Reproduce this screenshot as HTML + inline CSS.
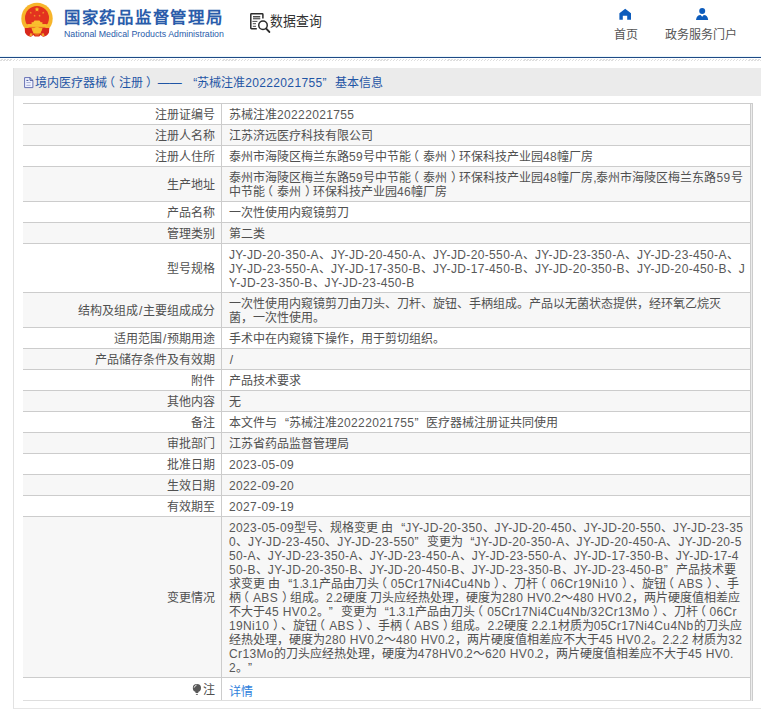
<!DOCTYPE html>
<html lang="zh-CN">
<head>
<meta charset="utf-8">
<title>国家药品监督管理局 数据查询</title>
<style>
html,body{margin:0;padding:0;}
body{width:761px;height:710px;overflow:hidden;background:#fff;position:relative;
  font-family:"Liberation Sans",sans-serif;font-size:12px;letter-spacing:0;line-height:14px;color:#505050;text-spacing-trim:space-all;}
.l{font-size:12px;letter-spacing:0.36px;color:#585858;}
#ptext .l{color:inherit;}
.sl{display:inline-block;width:4.6px;text-align:center;letter-spacing:0;font-size:12px;}
.l i{font-style:normal;letter-spacing:-0.75px;}
b.p1,b.p2{font-weight:normal;position:relative;}
b.p1{left:-4px;}
b.p2{left:3.5px;}
.q1,.q2{display:inline-block;width:12px;}
.q1{text-align:right;}
.q2{text-align:left;}
#hdr{position:absolute;left:0;top:0;width:761px;height:57px;background:#fff;}
#emblem{position:absolute;left:16px;top:0;width:42px;height:42px;}
#t1{position:absolute;left:64px;top:5.5px;font-size:16.4px;letter-spacing:1.72px;line-height:22px;font-weight:bold;color:#2a5caa;white-space:nowrap;}
#t2{letter-spacing:0;position:absolute;left:64px;top:27.5px;font-size:8.8px;line-height:12px;color:#2a5caa;white-space:nowrap;}
#qicon{position:absolute;left:246px;top:8px;width:28px;height:28px;}
#qtext{letter-spacing:0;position:absolute;left:270px;top:11px;font-size:14px;line-height:20px;color:#333;white-space:nowrap;transform-origin:0 0;transform:scaleX(0.918);}
.nav{letter-spacing:0;position:absolute;top:28px;font-size:12px;line-height:14px;color:#555;white-space:nowrap;text-align:center;}
.navi{position:absolute;}
#bline{position:absolute;left:0;top:56px;width:761px;height:1px;background:#1f4a85;border-top:1px solid #e9f6fc;}
#hatch{position:absolute;left:0;top:59px;width:761px;height:2px;
  background:repeating-linear-gradient(135deg,#fff 0,#fff 1.3px,#dedede 1.3px,#dedede 2.15px);}
#panel{position:absolute;left:13px;top:68px;width:760px;height:641px;border-left:1px solid #e2e2e2;border-bottom:1px solid #e6e6e6;box-sizing:border-box;}
#ptitle{position:absolute;left:0;top:0;width:760px;height:28px;background:#ebebeb;}
#picon{position:absolute;left:10px;top:8.5px;width:10px;height:12px;}
#ptext{position:absolute;left:20.5px;top:8px;line-height:14px;color:#1f55a5;white-space:nowrap;}
#tbl{position:absolute;left:23px;top:103px;width:728px;border-top:1px solid #ccc;}
.r{display:flex;border-bottom:1px solid #ccc;background:#fff;}
.r.g{background:#f7f7f7;}
.k{flex:none;width:199px;box-sizing:border-box;padding:4px 6px 2px 0;text-align:right;border-right:1px solid #ccc;display:flex;align-items:center;justify-content:flex-end;white-space:nowrap;}
.v{flex:1;min-width:0;overflow:hidden;box-sizing:border-box;padding:4px 0 2px 7px;white-space:nowrap;border-right:1px solid #ccc;}
#rb{position:absolute;left:751px;top:103px;width:1px;height:597px;background:#ececec;border-right:1px solid #ccc;border-top:1px solid #ccc;}
a{color:#2f7fdc;text-decoration:none;}
.bulb{width:10px;height:13px;margin-right:1px;flex:none;position:relative;top:-0.8px;}
.r.last .k{padding-top:5px;padding-bottom:3px;}
.r.last .v{padding-top:7px;padding-bottom:1px;}
.r.last{border-bottom-color:#dedede;}
</style>
</head>
<body>
<div id="hdr">
  <svg id="emblem" viewBox="0 0 42 42">
<circle cx="21" cy="18.4" r="15.7" fill="#f7b52b"/>
<circle cx="21" cy="17.9" r="12" fill="#e3321f"/>
<path d="M9.8,24.3 H32.2 L31.5,28.2 H10.5 Z" fill="#f7b52b"/>
<path d="M17.2,22.2 L18.6,20.6 H23.4 L24.8,22.2 H26.4 V24.4 H15.6 V22.2 Z" fill="#f9c02e"/>
<rect x="11.8" y="24.2" width="18.4" height="2.5" fill="#f9c02e"/>
<rect x="12.6" y="26.9" width="16.8" height="1.2" fill="#ee7a25"/>
<path d="M8.7,28 H33.3 L33,32.6 Q31,36.9 27,36.7 L24.6,35 L23.2,36.5 H18.8 L17.4,35 L15,36.7 Q11,36.9 9,32.6 Z" fill="#d9281c"/>
<path d="M15.5,28 H26.5 L25.8,30.5 Q24.8,32 24.6,33.4 H17.4 Q17.2,32 16.2,30.5 Z" fill="#f7b52b"/>
<circle cx="21" cy="30.4" r="3.5" fill="#f9c02e"/>
<path d="M14.2,33.2 L16.6,33.6 L16,36 L13.4,36.2 Z M27.8,33.2 L25.4,33.6 L26,36 L28.6,36.2 Z" fill="#f3a12a"/>
<path d="M18.6,33.6 H23.4 L23,35.6 H19 Z" fill="#e8641f"/>
<polygon points="21.00,6.90 21.62,8.55 23.38,8.63 22.00,9.72 22.47,11.42 21.00,10.45 19.53,11.42 20.00,9.72 18.62,8.63 20.38,8.55" fill="#f9c22e"/><polygon points="14.80,11.55 15.11,12.38 15.99,12.41 15.30,12.96 15.53,13.81 14.80,13.33 14.07,13.81 14.30,12.96 13.61,12.41 14.49,12.38" fill="#f6ae2a"/><polygon points="27.20,11.55 27.51,12.38 28.39,12.41 27.70,12.96 27.93,13.81 27.20,13.33 26.47,13.81 26.70,12.96 26.01,12.41 26.89,12.38" fill="#f6ae2a"/><polygon points="18.60,14.55 18.91,15.38 19.79,15.41 19.10,15.96 19.33,16.81 18.60,16.32 17.87,16.81 18.10,15.96 17.41,15.41 18.29,15.38" fill="#f6ae2a"/><polygon points="23.60,14.55 23.91,15.38 24.79,15.41 24.10,15.96 24.33,16.81 23.60,16.32 22.87,16.81 23.10,15.96 22.41,15.41 23.29,15.38" fill="#f6ae2a"/></svg>
  <div id="t1">国家药品监督管理局</div>
  <div id="t2">National Medical Products Administration</div>
  <svg id="qicon" viewBox="0 0 28 28" fill="none" stroke="#2b2b2b" stroke-width="1.5">
<path d="M16.9,10.6 V6.5 Q16.9,5.8 16.2,5.8 H5.5 Q4.8,5.8 4.8,6.5 V20 Q4.8,20.7 5.5,20.7 H10.8"/>
<rect x="7" y="8.3" width="7.2" height="2.8" fill="#a5a5a5" stroke="none"/>
<path d="M7,8.5 H14.2 M7,10.8 H14.2 M6.4,13.4 H11.4 M6.8,15.7 H10 M6.8,18.3 H10" stroke-width="1" stroke="#4a4a4a"/>
<circle cx="17" cy="17.3" r="4.25" stroke-width="1.5"/>
<path d="M20.2,20.6 L23.3,23.9" stroke-width="2" stroke-linecap="round"/>
</svg>
  <div id="qtext">数据查询</div>
  <svg class="navi" style="left:611px;top:4px;width:30px;height:20px;" viewBox="0 0 30 20"><path d="M14.2,4.7 L20,9.2 V15.8 H16.2 V11.8 H11.8 V15.8 H8.4 V9.2 Z" fill="#0d5cbc"/></svg>
  <svg class="navi" style="left:687px;top:4px;width:30px;height:20px;" viewBox="0 0 30 20"><circle cx="15.2" cy="7.1" r="3" fill="#0d5cbc"/><path d="M9,16 Q9.6,11 13.6,11 L15.2,12.7 L16.8,11 Q20.6,11 21.2,16 Z" fill="#0d5cbc"/></svg>
  <div class="nav" style="left:613px;width:25px;">首页</div>
  <div class="nav" style="left:665px;width:72px;">政务服务门户</div>
</div>
<div id="bline"></div>
<div id="hatch"></div>
<div id="panel">
  <div id="ptitle">
    <svg id="picon" viewBox="0 0 10 12"><path d="M0.6,0.6 H6 L8.9,3.4 V10.6 H0.6 Z" fill="#f1f3ff" stroke="#6670b4" stroke-width="1"/><path d="M6,0.6 V3.4 H8.9" fill="none" stroke="#3f4f95" stroke-width="0.9"/><path d="M2.4,3.4 H4.4" stroke="#2c3f86" stroke-width="0.9"/><path d="M2.4,5.6 H6.6 M2.4,8.3 H6.6" stroke="#8d97c4" stroke-width="0.8"/></svg>
    <div id="ptext">境内医疗器械<b class="p1">（</b>注册<b class="p2">）</b> —— <span class="q1">“</span>苏械注准<span class="l">20222021755</span><span class="q2">”</span>基本信息</div>
  </div>
</div>
<div id="tbl">
<div class="r"><div class="k">注册证编号</div><div class="v">苏械注准<span class="l">20222021755</span></div></div>
<div class="r g"><div class="k">注册人名称</div><div class="v">江苏济远医疗科技有限公司</div></div>
<div class="r"><div class="k">注册人住所</div><div class="v">泰州市海陵区梅兰东路<span class="l">59</span>号中节能<b class="p1">（</b>泰州<b class="p2">）</b>环保科技产业园<span class="l">48</span>幢厂房</div></div>
<div class="r g"><div class="k">生产地址</div><div class="v">泰州市海陵区梅兰东路<span class="l">59</span>号中节能<b class="p1">（</b>泰州<b class="p2">）</b>环保科技产业园<span class="l">48</span>幢厂房,泰州市海陵区梅兰东路<span class="l">59</span>号<br>中节能<b class="p1">（</b>泰州<b class="p2">）</b>环保科技产业园<span class="l">46</span>幢厂房</div></div>
<div class="r"><div class="k">产品名称</div><div class="v">一次性使用内窥镜剪刀</div></div>
<div class="r g"><div class="k">管理类别</div><div class="v">第二类</div></div>
<div class="r"><div class="k">型号规格</div><div class="v"><span class="l">JY-JD-20-350-A</span>、<span class="l">JY-JD-20-450-A</span>、<span class="l">JY-JD-20-550-A</span>、<span class="l">JY-JD-23-350-A</span>、<span class="l">JY-JD-23-450-A</span>、<br><span class="l">JY-JD-23-550-A</span>、<span class="l">JY-JD-17-350-B</span>、<span class="l">JY-JD-17-450-B</span>、<span class="l">JY-JD-20-350-B</span>、<span class="l">JY-JD-20-450-B</span>、<span class="l">J</span><br><span class="l">Y-JD-23-350-B</span>、<span class="l">JY-JD-23-450-B</span></div></div>
<div class="r g"><div class="k">结构及组成<span class="sl">/</span>主要组成成分</div><div class="v">一次性使用内窥镜剪刀由刀头、刀杆、旋钮、手柄组成。产品以无菌状态提供，经环氧乙烷灭<br>菌，一次性使用。</div></div>
<div class="r"><div class="k">适用范围<span class="sl">/</span>预期用途</div><div class="v">手术中在内窥镜下操作，用于剪切组织。</div></div>
<div class="r g"><div class="k">产品储存条件及有效期</div><div class="v"><span class="sl">/</span></div></div>
<div class="r"><div class="k">附件</div><div class="v">产品技术要求</div></div>
<div class="r g"><div class="k">其他内容</div><div class="v">无</div></div>
<div class="r"><div class="k">备注</div><div class="v">本文件与<span class="q1">“</span>苏械注准<span class="l">20222021755</span><span class="q2">”</span>医疗器械注册证共同使用</div></div>
<div class="r g"><div class="k">审批部门</div><div class="v">江苏省药品监督管理局</div></div>
<div class="r"><div class="k">批准日期</div><div class="v"><span class="l">2023-05-09</span></div></div>
<div class="r g"><div class="k">生效日期</div><div class="v"><span class="l">2022-09-20</span></div></div>
<div class="r"><div class="k">有效期至</div><div class="v"><span class="l">2027-09-19</span></div></div>
<div class="r g"><div class="k">变更情况</div><div class="v"><span class="l">2023-05-09</span>型号、规格变更 由<span class="q1">“</span><span class="l">JY-JD-20-350</span>、<span class="l">JY-JD-20-450</span>、<span class="l">JY-JD-20-550</span>、<span class="l">JY-JD-23-35</span><br><span class="l">0</span>、<span class="l">JY-JD-23-450</span>、<span class="l">JY-JD-23-550</span><span class="q2">”</span>变更为<span class="q1">“</span><span class="l">JY-JD-20-350-A</span>、<span class="l">JY-JD-20-450-A</span>、<span class="l">JY-JD-20-5</span><br><span class="l">50-A</span>、<span class="l">JY-JD-23-350-A</span>、<span class="l">JY-JD-23-450-A</span>、<span class="l">JY-JD-23-550-A</span>、<span class="l">JY-JD-17-350-B</span>、<span class="l">JY-JD-17-4</span><br><span class="l">50-B</span>、<span class="l">JY-JD-20-350-B</span>、<span class="l">JY-JD-20-450-B</span>、<span class="l">JY-JD-23-350-B</span>、<span class="l">JY-JD-23-450-B</span><span class="q2">”</span>产品技术要<br>求变更 由<span class="q1">“</span><span class="l">1<i>.</i>3<i>.</i>1</span>产品由刀头<b class="p1">（</b><span class="l">05Cr17Ni4Cu4Nb</span><b class="p2">）</b>、刀杆<b class="p1">（</b><span class="l">06Cr19Ni10</span><b class="p2">）</b>、旋钮<b class="p1">（</b><span class="l">ABS</span><b class="p2">）</b>、手<br>柄<b class="p1">（</b><span class="l">ABS</span><b class="p2">）</b>组成。<span class="l">2<i>.</i>2</span>硬度 刀头应经热处理，硬度为<span class="l">280 HV0<i>.</i>2</span>～<span class="l">480 HV0<i>.</i>2</span>，两片硬度值相差应<br>不大于<span class="l">45 HV0<i>.</i>2</span>。<span class="q2">”</span>变更为<span class="q1">“</span><span class="l">1<i>.</i>3<i>.</i>1</span>产品由刀头<b class="p1">（</b><span class="l">05Cr17Ni4Cu4Nb/32Cr13Mo</span><b class="p2">）</b>、刀杆<b class="p1">（</b><span class="l">06Cr</span><br><span class="l">19Ni10</span><b class="p2">）</b>、旋钮<b class="p1">（</b><span class="l">ABS</span><b class="p2">）</b>、手柄<b class="p1">（</b><span class="l">ABS</span><b class="p2">）</b>组成。<span class="l">2<i>.</i>2</span>硬度 <span class="l">2<i>.</i>2<i>.</i>1</span>材质为<span class="l">05Cr17Ni4Cu4Nb</span>的刀头应<br>经热处理，硬度为<span class="l">280 HV0<i>.</i>2</span>～<span class="l">480 HV0<i>.</i>2</span>，两片硬度值相差应不大于<span class="l">45 HV0<i>.</i>2</span>。<span class="l">2<i>.</i>2<i>.</i>2</span> 材质为<span class="l">32</span><br><span class="l">Cr13Mo</span>的刀头应经热处理，硬度为<span class="l">478HV0<i>.</i>2</span>～<span class="l">620 HV0<i>.</i>2</span>，两片硬度值相差应不大于<span class="l">45 HV0<i>.</i></span><br><span class="l">2</span>。<span class="q2">”</span></div></div>
<div class="r last"><div class="k"><svg class="bulb" viewBox="0 0 10 13"><circle cx="4.9" cy="5.1" r="4.1" fill="#585858"/><path d="M3.3,8.6 H6.5 L6.2,10.1 H3.6 Z" fill="#585858"/><rect x="3.9" y="10.9" width="2" height="0.9" fill="#585858"/><path d="M2.2,4.6 Q2.7,2.6 4.6,2.1" stroke="#fff" stroke-width="0.9" fill="none"/></svg>注</div><div class="v"><a>详情</a></div></div>
</div>
<div id="rb"></div>
</body>
</html>
